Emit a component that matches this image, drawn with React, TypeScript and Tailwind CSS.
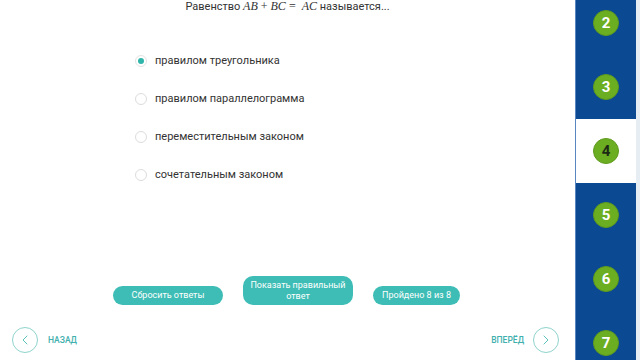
import { ChevronLeft, ChevronRight } from "lucide-react";

const options = [
  "правилом треугольника",
  "правилом параллелограмма",
  "переместительным законом",
  "сочетательным законом",
];

const steps = [2, 3, 4, 5, 6, 7];

export default function App() {
  return (
    <div className="flex h-[360px] w-[640px] overflow-hidden bg-white font-['Roboto',sans-serif]">
      {/* main column */}
      <div className="flex w-[575px] flex-col">
        <p className="mt-[-2px] text-center text-[11px] leading-[16px] text-[#333]">
          Равенство{" "}
          <span className="font-['Liberation_Serif',serif] text-[12px] italic">AB</span>
          <span className="font-['Liberation_Serif',serif] text-[12px]"> + </span>
          <span className="font-['Liberation_Serif',serif] text-[12px] italic">BC</span>
          <span className="font-['Liberation_Serif',serif] text-[12px]"> = &nbsp;</span>
          <span className="font-['Liberation_Serif',serif] text-[12px] italic">AC</span> называется...
        </p>

        <div className="ml-[135px] mt-[27px] flex flex-col">
          {options.map((o, i) => (
            <label key={i} className="flex h-[38px] items-center gap-[8px]">
              <span
                className={
                  i === 0
                    ? "flex h-[12px] w-[12px] items-center justify-center rounded-full border border-[#e3e3e3]"
                    : "h-[12px] w-[12px] rounded-full border border-[#dcdcdc]"
                }
              >
                {i === 0 && <span className="h-[6px] w-[6px] rounded-full bg-[#2fb5aa]" />}
              </span>
              <span className="text-[11px] text-[#333]">{o}</span>
            </label>
          ))}
        </div>

        <div className="mt-auto flex items-end pl-[113px]">
          <button className="h-[19px] w-[110px] rounded-full bg-[#3dbdb5] text-[9px] text-white">
            Сбросить ответы
          </button>
          <button className="ml-[20px] h-[29px] w-[110px] rounded-[10px] bg-[#3dbdb5] px-1 text-[9px] leading-[11px] text-white">
            Показать правильный ответ
          </button>
          <button className="ml-[20px] h-[19px] w-[87px] rounded-full bg-[#3dbdb5] text-[9px] text-white">
            Пройдено 8 из 8
          </button>
        </div>

        <div className="mb-[7px] mt-[22px] flex items-center justify-between pl-[12px] pr-[16px]">
          <div className="flex items-center gap-[10px]">
            <span className="flex h-[26px] w-[26px] items-center justify-center rounded-full border border-[#8fd3cd]">
              <ChevronLeft className="h-[16px] w-[16px] text-[#5cc4bb]" strokeWidth={1.5} />
            </span>
            <span className="text-[8.5px] font-medium text-[#3fb0ae]">НАЗАД</span>
          </div>
          <div className="flex items-center gap-[9px]">
            <span className="text-[8.5px] font-medium text-[#3fb0ae]">ВПЕРЁД</span>
            <span className="flex h-[26px] w-[26px] items-center justify-center rounded-full border border-[#8fd3cd]">
              <ChevronRight className="h-[16px] w-[16px] text-[#5cc4bb]" strokeWidth={1.5} />
            </span>
          </div>
        </div>
      </div>

      {/* step sidebar */}
      <div className="w-[61px] border-l border-[#5a86c0] bg-[#0b4a92]">
        <div className="mt-[-9px] flex flex-col">
          {steps.map((n) => (
            <div
              key={n}
              className={
                n === 4
                  ? "flex h-[64px] items-center justify-center bg-white"
                  : "flex h-[64px] items-center justify-center"
              }
            >
              <span
                className={
                  n === 4
                    ? "flex h-[26px] w-[26px] items-center justify-center rounded-full border border-[#5e9a1c] bg-[#6cae22] text-[15px] font-bold text-[#1c2a14]"
                    : "flex h-[26px] w-[26px] items-center justify-center rounded-full border border-[#5e9a1c] bg-[#6cae22] text-[15px] font-bold text-white"
                }
              >
                {n}
              </span>
            </div>
          ))}
        </div>
      </div>
      <div className="w-[4px] bg-[#e6edf3]" />
    </div>
  );
}
